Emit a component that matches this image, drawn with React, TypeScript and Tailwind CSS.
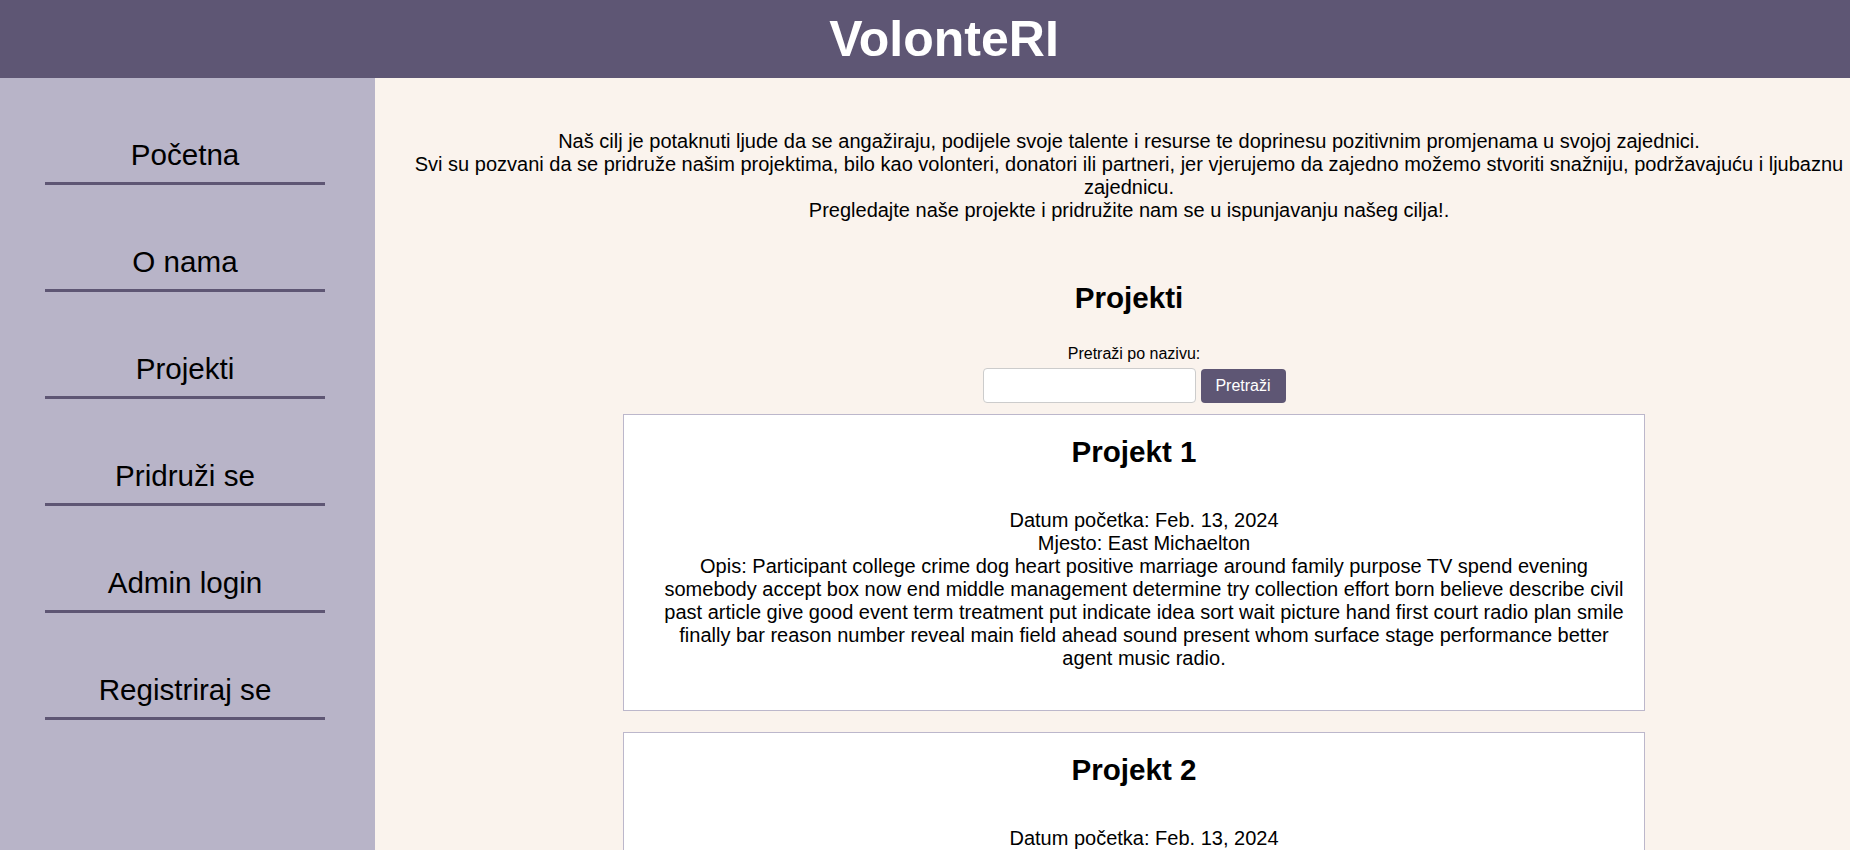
import React from 'react'

const navItems = ['Početna', 'O nama', 'Projekti', 'Pridruži se', 'Admin login', 'Registriraj se']

const projects = [
  {
    name: 'Projekt 1',
    date: 'Feb. 13, 2024',
    place: 'East Michaelton',
    desc: 'Participant college crime dog heart positive marriage around family purpose TV spend evening somebody accept box now end middle management determine try collection effort born believe describe civil past article give good event term treatment put indicate idea sort wait picture hand first court radio plan smile finally bar reason number reveal main field ahead sound present whom surface stage performance better agent music radio.',
  },
  {
    name: 'Projekt 2',
    date: 'Feb. 13, 2024',
    place: 'Lake Jennifer',
    desc: 'Teacher record option stage nation seek light bank question during simple tend realize throughout bring worker gas nature happy animal thousand discussion.',
  },
]

export default function App() {
  return (
    <div className="min-h-screen flex flex-col text-black" style={{ fontFamily: '"Liberation Sans", Arial, sans-serif' }}>
      {/* Header */}
      <header className="h-[78px] bg-[#5e5674] flex items-center justify-center pl-[38px] shrink-0">
        <h1 className="text-[50px] leading-[57px] font-bold text-white">VolonteRI</h1>
      </header>

      <div className="flex flex-1">
        {/* Sidebar */}
        <aside className="w-[375px] shrink-0 bg-[#b8b4c8]">
          <ul className="pl-[45px]">
            {navItems.map(item => (
              <li key={item} className="w-[280px] mt-[60px] pb-[10px] border-b-[3px] border-[#5e5674] text-center text-[29.6px] leading-[34px]">
                <a href="#">{item}</a>
              </li>
            ))}
          </ul>
        </aside>

        {/* Main */}
        <main className="flex-1 bg-[#faf3ed] pl-[33px] pt-[52px] pb-10">
          <p className="text-center text-[20px] leading-[23px]">
            Naš cilj je potaknuti ljude da se angažiraju, podijele svoje talente i resurse te doprinesu pozitivnim promjenama u svojoj zajednici.
            <br />
            Svi su pozvani da se pridruže našim projektima, bilo kao volonteri, donatori ili partneri, jer vjerujemo da zajedno možemo stvoriti snažniju, podržavajuću i ljubaznu zajednicu.
            <br />
            Pregledajte naše projekte i pridružite nam se u ispunjavanju našeg cilja!.
          </p>

          <h2 className="mt-[59px] text-center text-[29.6px] leading-[34px] font-bold">Projekti</h2>

          <div className="pl-[10px]">
            <label className="block mt-[30px] text-center text-[16px] leading-[18px]">Pretraži po nazivu:</label>
            <div className="flex justify-center items-center gap-[5px] mt-[5px]">
              <input type="text" className="w-[213px] h-[35px] bg-white border border-[#cccccc] rounded-[4px] px-2 text-[16px]" />
              <button className="w-[85px] h-[34px] bg-[#5e5674] text-white text-[16px] rounded-[4px]">Pretraži</button>
            </div>

            <div className="mt-[11px] flex flex-col items-center gap-[21px]">
              {projects.map(p => (
                <div key={p.name} className="w-[1022px] bg-white border border-[#bcb7cb] pt-[20px] pb-[40px] px-[10px] text-center">
                  <h3 className="text-[29.6px] leading-[34px] font-bold">{p.name}</h3>
                  <div className="mt-[40px] pl-[20px] text-[20px] leading-[23px]">
                    <div>Datum početka: {p.date}</div>
                    <div>Mjesto: {p.place}</div>
                    <div>Opis: {p.desc}</div>
                  </div>
                </div>
              ))}
            </div>
          </div>
        </main>
      </div>
    </div>
  )
}
